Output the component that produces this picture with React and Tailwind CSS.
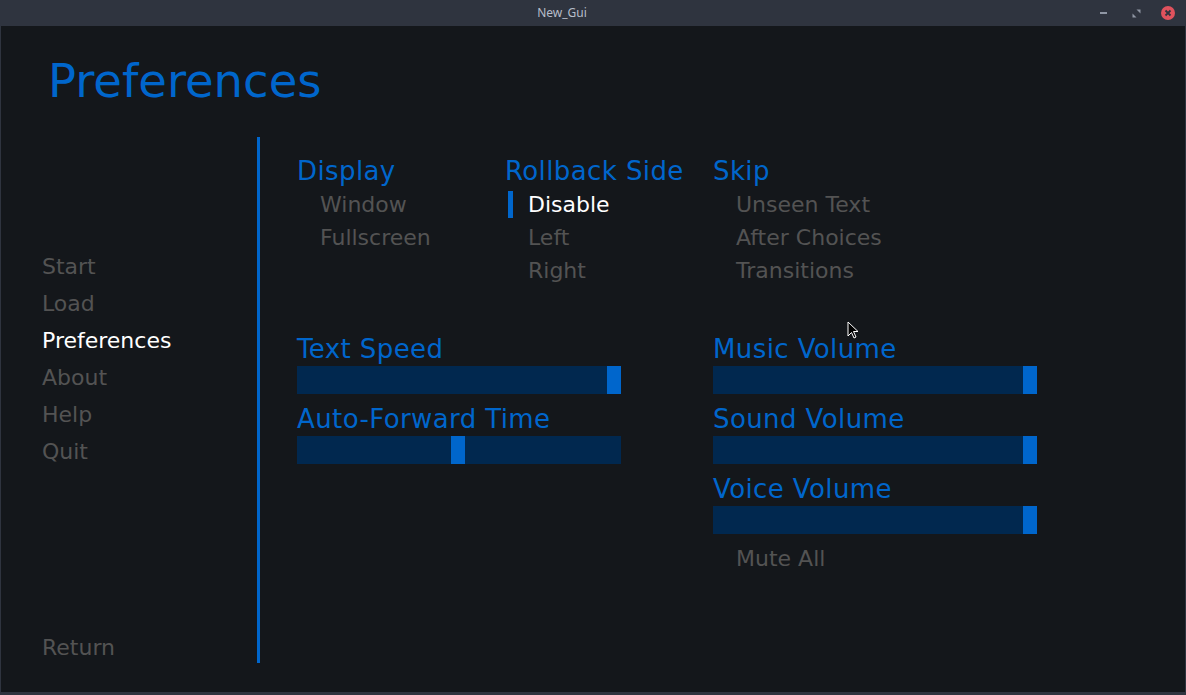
import React from 'react'

const font = { fontFamily: '"DejaVu Sans", sans-serif' }

const navItems = [
  { label: 'Start' },
  { label: 'Load' },
  { label: 'Preferences', active: true },
  { label: 'About' },
  { label: 'Help' },
  { label: 'Quit' }
]

const prefGroups = [
  { title: 'Display', options: [{ label: 'Window' }, { label: 'Fullscreen' }] },
  {
    title: 'Rollback Side',
    options: [{ label: 'Disable', selected: true }, { label: 'Left' }, { label: 'Right' }]
  },
  { title: 'Skip', options: [{ label: 'Unseen Text' }, { label: 'After Choices' }, { label: 'Transitions' }] }
]

const Slider = ({ label, value }) => (
  <div className="flex flex-col">
    <div className="h-[34px] flex items-center text-[26px] text-[#0066cc] tracking-[0.4px]">{label}</div>
    <div className="relative h-[28px] w-[324px] bg-[#01284f]">
      <div className="absolute top-0 h-[28px] w-[14px] bg-[#0066cc]" style={{ left: `${value * 310}px` }} />
    </div>
  </div>
)

const TitleBar = () => (
  <div className="h-[26px] flex items-center bg-[#2f343f] shrink-0">
    <div className="w-[1124px] shrink-0 text-center text-[12px] text-[#b7bdca]" style={{ fontFamily: '"Noto Sans", sans-serif' }}>
      New_Gui
    </div>
    <div className="ml-[-24px] flex items-center h-full">
      <div className="w-[7px] h-[2px] bg-[#8f96a4]" />
      <svg width="9" height="9" viewBox="0 0 9 9" className="ml-[25px]">
        <path d="M4.5 0.5 H8.5 V4.5 Z" fill="#8f96a4" />
        <path d="M0.5 4.5 V8.5 H4.5 Z" fill="#8f96a4" />
      </svg>
      <div className="ml-[20px] w-[14px] h-[14px] rounded-full bg-[#e0525d] flex items-center justify-center">
        <svg width="8" height="8" viewBox="0 0 8 8">
          <path d="M1.5 1.5 L6.5 6.5 M6.5 1.5 L1.5 6.5" stroke="#2f343f" strokeWidth="1.8" />
        </svg>
      </div>
    </div>
  </div>
)

export default function App() {
  return (
    <div className="w-[1186px] h-[695px] bg-[#2f343f] flex flex-col overflow-hidden" style={font}>
      <TitleBar />
      <div className="relative flex-1 mx-[1px] mb-[3px] bg-[#14171b] flex flex-col">
        {/* Header */}
        <div className="pl-[47px] pt-[27px] h-[111px] text-[46.5px] leading-[56px] text-[#0066cc]">Preferences</div>

        <div className="flex">
          {/* Navigation */}
          <div className="w-[256px] pl-[41px] flex flex-col text-[22px] leading-[37px]">
            <div className="mt-[111px] flex flex-col">
              {navItems.map(item => (
                <span key={item.label} className={item.active ? 'text-white' : 'text-[#535353]'}>
                  {item.label}
                </span>
              ))}
            </div>
            <span className="mt-[159px] text-[#535353]">Return</span>
          </div>

          <div className="w-[3px] h-[526px] bg-[#0066cc]" />

          {/* Settings */}
          <div className="pl-[37px] pt-[18px] flex flex-col">
            <div className="grid grid-cols-[208px_208px_208px]">
              {prefGroups.map(group => (
                <div key={group.title} className="flex flex-col leading-[33px]">
                  <span className="text-[26px] text-[#0066cc] tracking-[0.4px]">{group.title}</span>
                  {group.options.map(opt => (
                    <div key={opt.label} className="relative pl-[23px] text-[22px]">
                      {opt.selected && <div className="absolute left-[3px] top-[3px] w-[5px] h-[27px] bg-[#0066cc]" />}
                      <span className={opt.selected ? 'text-white' : 'text-[#535353]'}>{opt.label}</span>
                    </div>
                  ))}
                </div>
              ))}
            </div>

            <div className="mt-[45px] grid grid-cols-[324px_324px] gap-x-[92px]">
              <div className="flex flex-col gap-[8px]">
                <Slider label="Text Speed" value={1} />
                <Slider label="Auto-Forward Time" value={0.497} />
              </div>
              <div className="flex flex-col">
                <div className="flex flex-col gap-[8px]">
                  <Slider label="Music Volume" value={1} />
                  <Slider label="Sound Volume" value={1} />
                  <Slider label="Voice Volume" value={1} />
                </div>
                <span className="mt-[8px] pl-[23px] text-[22px] leading-[33px] text-[#535353]">Mute All</span>
              </div>
            </div>
          </div>
        </div>

        {/* Mouse pointer */}
        <svg className="absolute left-[846px] top-[295px]" width="12" height="19" viewBox="0 0 12 19">
          <path d="M1 1 V15 L4.5 11.5 L7 17 L9 16 L6.5 10.5 H11 Z" fill="#000" stroke="#fff" strokeWidth="1" />
        </svg>
      </div>
    </div>
  )
}
